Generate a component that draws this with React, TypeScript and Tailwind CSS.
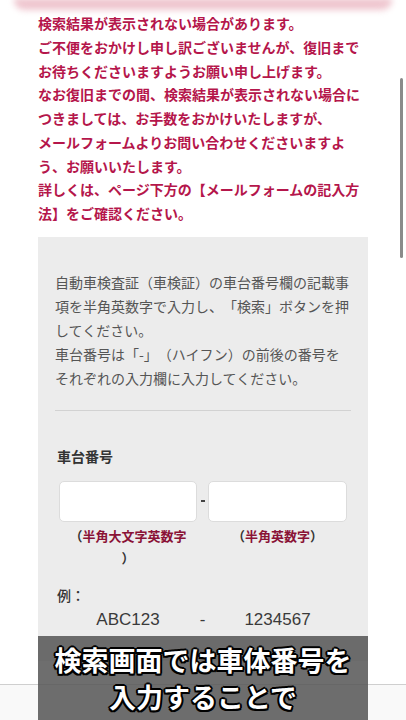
const NOTICE = [
  "検索結果が表示されない場合があります。",
  "ご不便をおかけし申し訳ございませんが、復旧まで",
  "お待ちくださいますようお願い申し上げます。",
  "なお復旧までの間、検索結果が表示されない場合に",
  "つきましては、お手数をおかけいたしますが、",
  "メールフォームよりお問い合わせくださいますよ",
  "う、お願いいたします。",
  "詳しくは、ページ下方の【メールフォームの記入方",
  "法】をご確認ください。",
];

const GUIDE = [
  "自動車検査証（車検証）の車台番号欄の記載事",
  "項を半角英数字で入力し、「検索」ボタンを押",
  "してください。",
  "車台番号は「-」（ハイフン）の前後の番号を",
  "それぞれの入力欄に入力してください。",
];

const outline =
  "[text-shadow:-1.5px_-1.5px_0_#000,1.5px_-1.5px_0_#000,-1.5px_1.5px_0_#000,1.5px_1.5px_0_#000,0_2px_0_#000,0_-2px_0_#000,2px_0_0_#000,-2px_0_0_#000]";

export default function App() {
  return (
    <div className="relative w-[406px] h-[720px] overflow-hidden bg-white [text-spacing-trim:space-all] font-['Noto_Sans_CJK_JP','Noto_Sans',sans-serif]">
      {/* blurred card edge at top */}
      <div className="h-[12px] mx-[14px] rounded-b-[10px] bg-[#efc6cf] blur-[3px] -mt-[2px]" />

      {/* notice */}
      <div className="px-[38px] pt-[2px] text-[14px] leading-[23.75px] font-bold text-[#b5164b]">
        {NOTICE.map((l) => (
          <div key={l} className="whitespace-nowrap">{l}</div>
        ))}
      </div>

      {/* search panel */}
      <div className="mx-[38px] mt-[11px] bg-[#ececec] px-[17px] pt-[33px] pb-[30px]">
        <div className="text-[14px] leading-[24px] text-[#555]">
          {GUIDE.map((l) => (
            <div key={l} className="whitespace-nowrap">{l}</div>
          ))}
        </div>

        <div className="mt-[20px] h-px bg-[#d2d2d2]" />

        <div className="mt-[35px] ml-[2px] text-[14px] leading-[20px] font-bold text-[#333]">車台番号</div>

        <div className="mt-[15px] ml-[4px] flex items-center">
          <div className="w-[138px] h-[41px] rounded-[5px] bg-white border border-[#dcdcdc]" />
          <div className="w-[11px] flex justify-center">
            <div className="w-[4px] h-[2px] bg-[#444]" />
          </div>
          <div className="w-[139px] h-[41px] rounded-[5px] bg-white border border-[#dcdcdc]" />
        </div>

        <div className="mt-[3px] ml-[4px] flex text-[13px] leading-[22px] font-bold">
          <div className="w-[138px] text-center">
            <span className="text-[#333]">（</span>
            <span className="text-[#8a1236]">半角大文字英数字</span>
            <br />
            <span className="text-[#333]">）</span>
          </div>
          <div className="w-[11px]" />
          <div className="w-[139px] text-center">
            <span className="text-[#333]">（</span>
            <span className="text-[#8a1236]">半角英数字</span>
            <span className="text-[#333]">）</span>
          </div>
        </div>

        <div className="mt-[16px] ml-[2px] text-[14px] leading-[20px] font-medium text-[#333]">例：</div>

        <div className="mt-[4px] ml-[4px] flex text-[17px] leading-[22px] text-[#3a3a3a] font-['Liberation_Sans',sans-serif]">
          <div className="w-[138px] text-center">ABC123</div>
          <div className="w-[11px] text-center">-</div>
          <div className="w-[139px] text-center">1234567</div>
        </div>
      </div>

      {/* footer */}
      <div className="mt-[23px] border-t border-[#cfcfcf] bg-[#f9f9f9] h-[60px]" />

      {/* scrollbar */}
      <div className="absolute right-[3px] top-[78px] w-[3px] h-[180px] rounded-full bg-[#8a8a8a]" />

      {/* subtitle overlay */}
      <div className="absolute left-[38px] top-[636px] w-[330px] h-[84px] bg-[#555]/85 pt-[5px] text-center">
        <div className={`text-[27px] leading-[37px] font-bold text-white ${outline}`}>
          検索画面では車体番号を
          <br />
          入力することで
        </div>
      </div>
    </div>
  );
}
